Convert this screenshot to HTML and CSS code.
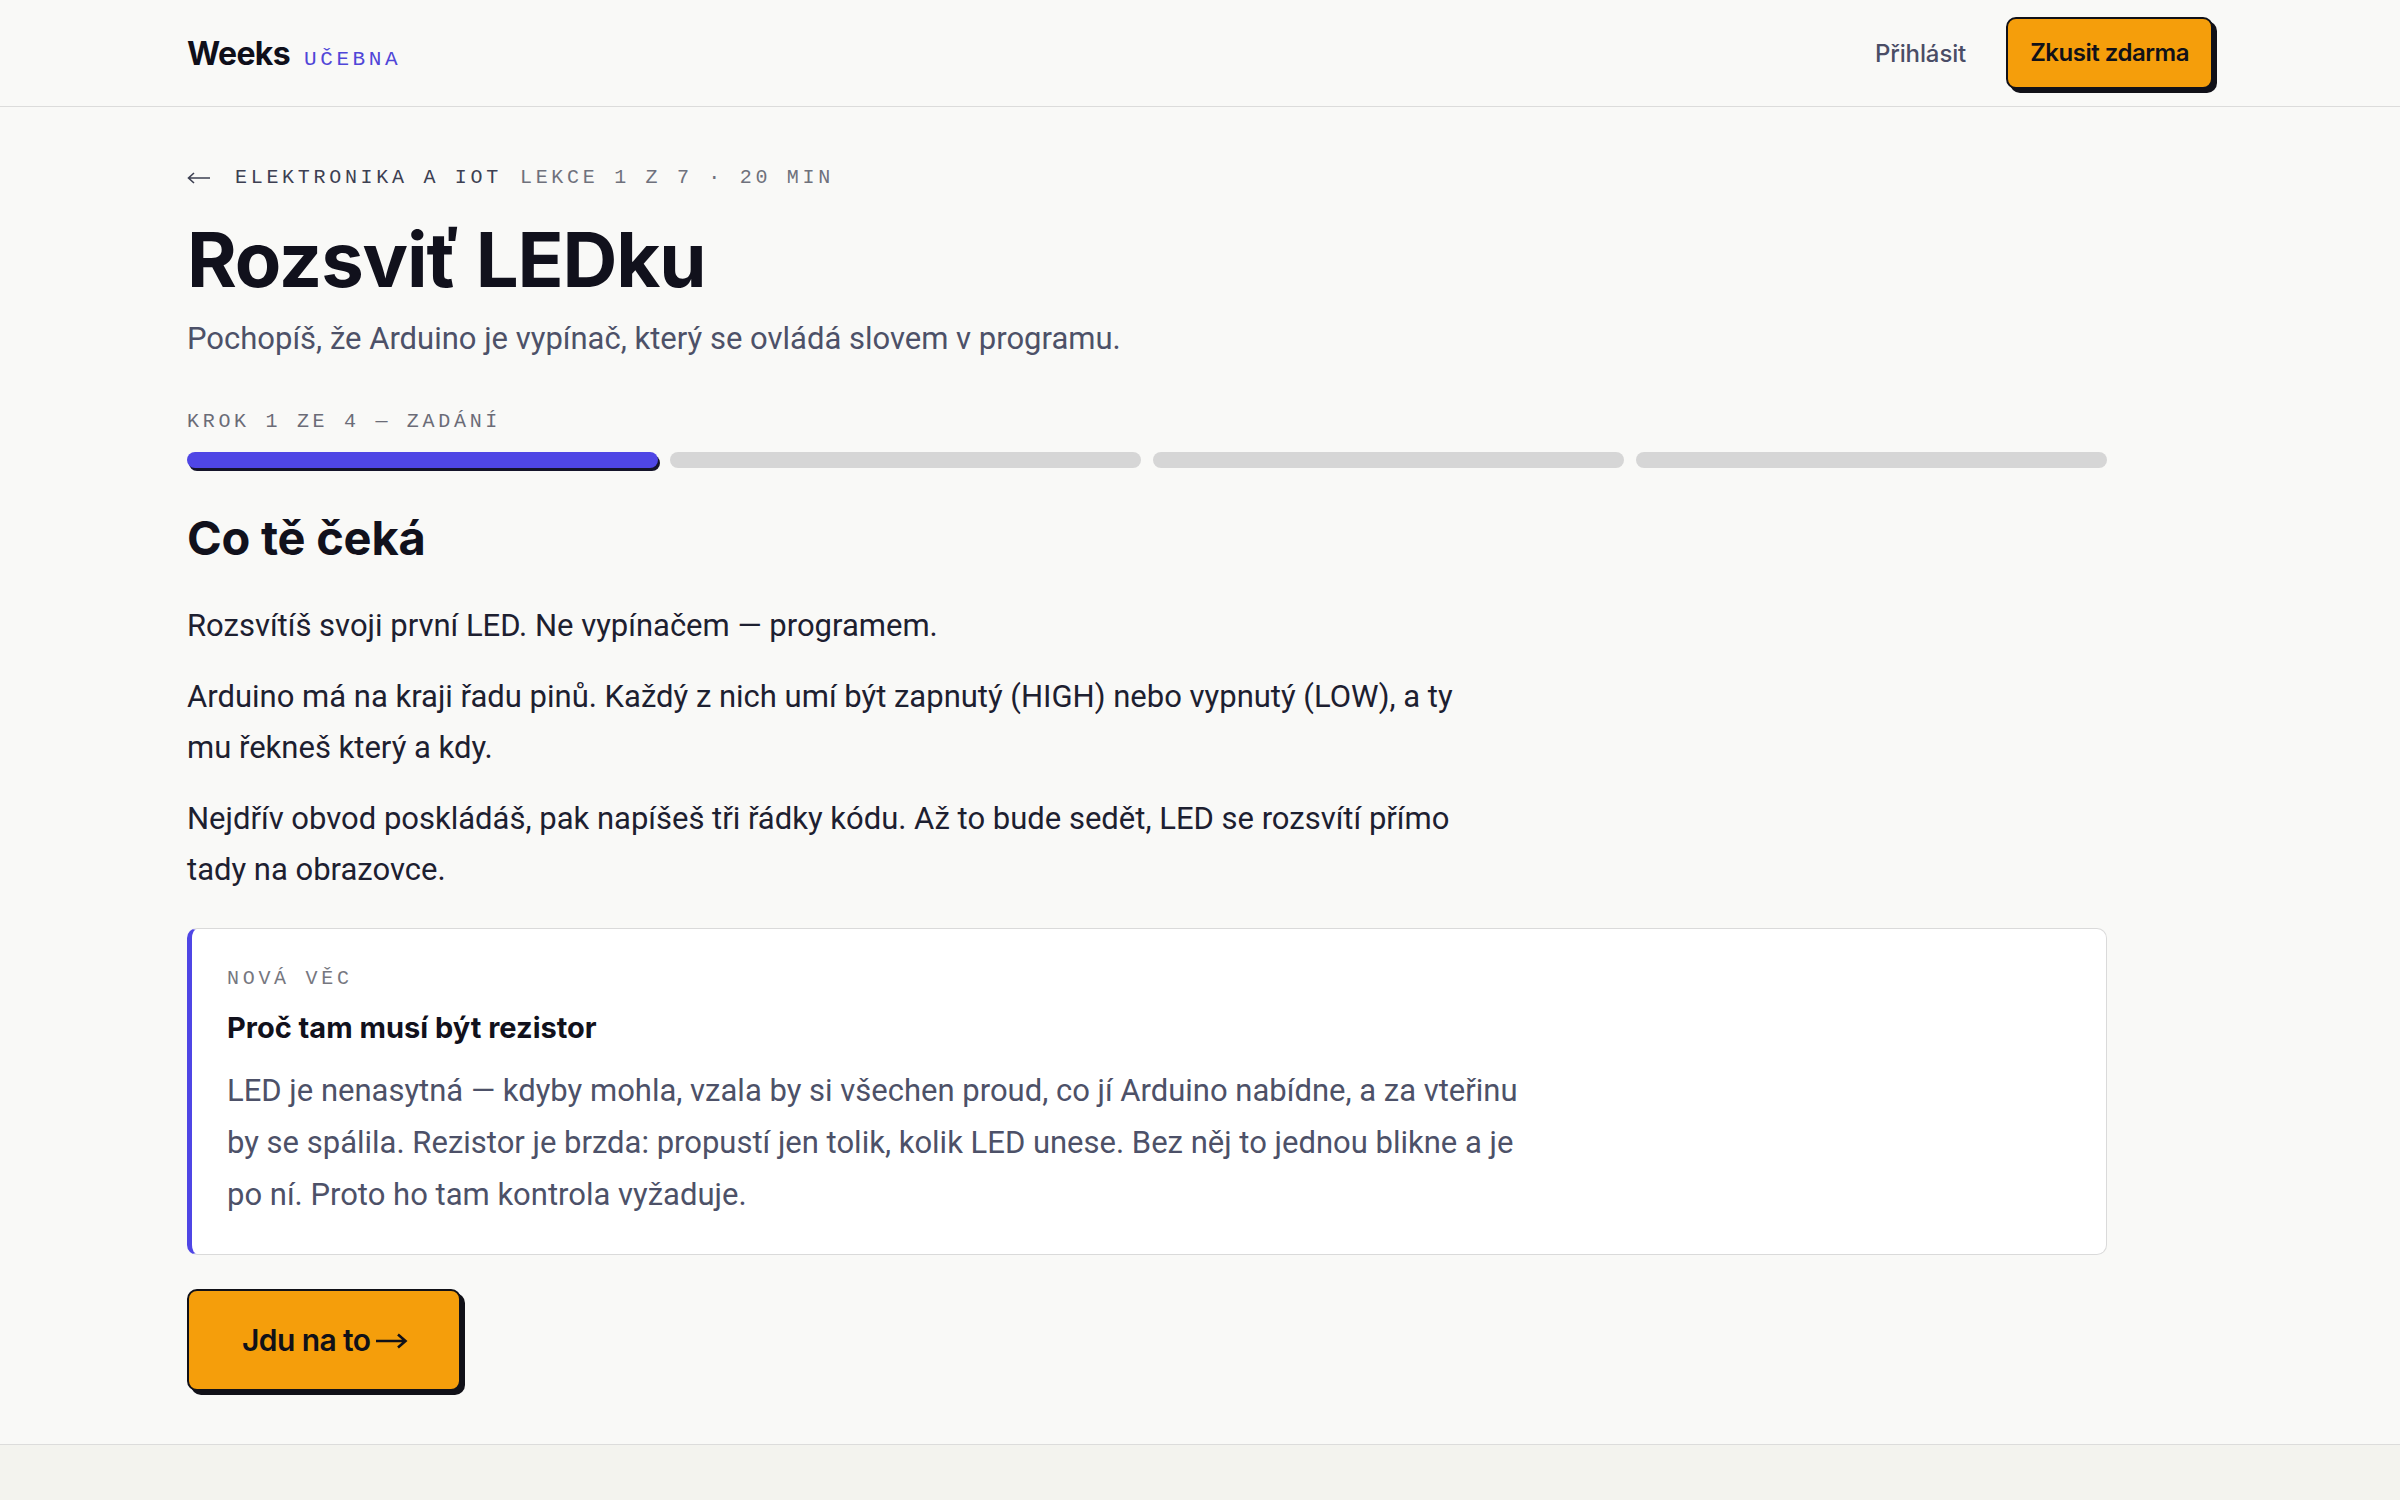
FILE: index.html
```html
<!DOCTYPE html>
<html lang="cs">
<head>
  <meta charset="UTF-8">
  <meta name="viewport" content="width=device-width, initial-scale=1.0">
  <title>Rozsviť LEDku – Weeks Učebna</title>
  <link rel="stylesheet" href="styles.css">
</head>
<body>
  <header class="topbar">
    <div class="wrap topbar-inner">
      <a class="brand" href="#">
        <span class="brand-name">Weeks</span>
        <span class="brand-tag">Učebna</span>
      </a>
      <nav class="topnav">
        <a class="nav-link" href="#">Přihlásit</a>
        <a class="btn btn-small" href="#">Zkusit zdarma</a>
      </nav>
    </div>
  </header>

  <main class="wrap">
    <div class="lesson">
      <div class="crumbs">
        <a class="crumb-back" href="#" aria-label="Zpět">
          <svg width="24" height="12" viewBox="0 0 24 12" fill="none" stroke="currentColor" stroke-width="1.6">
            <path d="M23 6H2M7 1L1.5 6L7 11"/>
          </svg>
        </a>
        <span class="crumb-course">Elektronika a IoT</span>
        <span class="crumb-meta">Lekce 1 z 7 · 20 min</span>
      </div>

      <h1>Rozsviť LEDku</h1>
      <p class="lead">Pochopíš, že Arduino je vypínač, který se ovládá slovem v programu.</p>

      <div class="step-label">Krok 1 ze 4 — Zadání</div>
      <div class="progress">
        <span class="seg active"></span>
        <span class="seg"></span>
        <span class="seg"></span>
        <span class="seg"></span>
      </div>

      <h2>Co tě čeká</h2>
      <div class="prose">
        <p>Rozsvítíš svoji první LED. Ne vypínačem — programem.</p>
        <p>Arduino má na kraji řadu pinů. Každý z nich umí být zapnutý (HIGH) nebo vypnutý (LOW), a ty mu řekneš který a kdy.</p>
        <p>Nejdřív obvod poskládáš, pak napíšeš tři řádky kódu. Až to bude sedět, LED se rozsvítí přímo tady na obrazovce.</p>
      </div>

      <aside class="callout">
        <div class="callout-label">Nová věc</div>
        <h3>Proč tam musí být rezistor</h3>
        <p>LED je nenasytná — kdyby mohla, vzala by si všechen proud, co jí Arduino nabídne, a za vteřinu by se spálila. Rezistor je brzda: propustí jen tolik, kolik LED unese. Bez něj to jednou blikne a je po ní. Proto ho tam kontrola vyžaduje.</p>
      </aside>

      <div class="actions">
        <button class="btn btn-big">Jdu na to
          <svg class="arrow" width="32" height="16" viewBox="0 0 32 16" fill="none" stroke="currentColor" stroke-width="2.6">
            <path d="M0 8H29M22 1.5L29.5 8L22 14.5"/>
          </svg>
        </button>
      </div>
    </div>
  </main>

  <footer class="page-foot"></footer>
</body>
</html>
```

FILE: styles.css
```css
* {
  box-sizing: border-box;
}

html, body {
  margin: 0;
  background: #f3f3ee;
}

body {
  font-family: Roboto, "Liberation Sans", sans-serif;
  color: #14141f;
}

.wrap {
  max-width: 2026px;
  margin: 0 auto;
}

/* top bar */
.topbar {
  background: #f9f9f7;
  border-bottom: 1px solid #dcdcdb;
}

.topbar-inner {
  height: 106px;
  display: flex;
  align-items: center;
  justify-content: space-between;
}

.brand {
  display: flex;
  align-items: baseline;
  gap: 14px;
  text-decoration: none;
}

.brand-name {
  font-family: Inter, Roboto, sans-serif;
  font-size: 32px;
  font-weight: 700;
  letter-spacing: -0.02em;
  color: #0f0f1a;
}

.brand-tag {
  font-family: "Liberation Mono", monospace;
  font-size: 21px;
  letter-spacing: 0.17em;
  text-transform: uppercase;
  color: #5046d8;
}

.topnav {
  display: flex;
  align-items: center;
  gap: 40px;
}

.nav-link {
  font-family: Inter, Roboto, sans-serif;
  font-size: 24px;
  font-weight: 500;
  letter-spacing: -0.005em;
  color: #4a4d66;
  text-decoration: none;
}

.btn {
  display: inline-flex;
  align-items: center;
  background: #f59e0b;
  color: #111118;
  border: 2px solid #111118;
  border-radius: 10px;
  box-shadow: 4px 4px 0 #111118;
  font-family: Inter, Roboto, sans-serif;
  font-weight: 600;
  text-decoration: none;
  cursor: pointer;
}

.btn-small {
  font-size: 24px;
  line-height: 32px;
  padding: 18px 22px;
  letter-spacing: -0.02em;
}

.btn-big {
  font-size: 30px;
  line-height: 38px;
  padding: 30px 51px 30px 53px;
  letter-spacing: -0.02em;
  gap: 6px;
}

.btn-big .arrow {
  margin-top: 2px;
}

/* lesson */
main {
  background: #f9f9f7;
  box-shadow: 0 0 0 100vmax #f9f9f7;
  clip-path: inset(0 -100vmax);
}

.lesson {
  max-width: 1920px;
  padding: 57px 0 53px;
}

.crumbs,
.step-label,
.callout-label {
  font-family: "Liberation Mono", monospace;
  font-size: 20px;
  line-height: 28px;
  letter-spacing: 0.185em;
  text-transform: uppercase;
}

.crumbs {
  display: flex;
  align-items: center;
  gap: 18px;
  color: #6f717c;
}

.crumb-back {
  display: flex;
  color: #3d4052;
  margin-right: 6px;
}

.crumb-course {
  color: #3d4052;
}

h1 {
  margin: 25px 0 0;
  font-family: Inter, Roboto, sans-serif;
  font-size: 76px;
  line-height: 84px;
  font-weight: 700;
  letter-spacing: -0.015em;
  color: #11111c;
}

.lead {
  margin: 15px 0 0;
  font-size: 31px;
  line-height: 46px;
  color: #4d5168;
}

.step-label {
  margin-top: 46px;
  color: #6b6c77;
}

.progress {
  display: grid;
  grid-template-columns: repeat(4, 1fr);
  gap: 12px;
  margin-top: 16px;
}

.seg {
  height: 16px;
  border-radius: 8px;
  background: #d6d6d6;
}

.seg.active {
  background: #4f46e5;
  box-shadow: 2px 3px 0 #15142a;
}

h2 {
  margin: 43px 0 0;
  font-family: Inter, Roboto, sans-serif;
  font-size: 47px;
  line-height: 54px;
  font-weight: 700;
  letter-spacing: -0.005em;
  color: #11111c;
}

.prose p {
  margin: 20px 0 0;
  max-width: 1292px;
  font-size: 31px;
  line-height: 51px;
  color: #1d2030;
}

.prose p:first-child {
  margin-top: 35px;
}

.callout {
  margin-top: 33px;
  background: #fff;
  border: 1px solid #dadada;
  border-left: 5px solid #4f46e5;
  border-radius: 10px;
  padding: 36px 40px 33px 35px;
}

.callout-label {
  color: #76777f;
}

.callout h3 {
  margin: 17px 0 0;
  font-family: Inter, Roboto, sans-serif;
  font-size: 29px;
  line-height: 36px;
  font-weight: 700;
  letter-spacing: 0;
  color: #11111c;
}

.callout p {
  margin: 19px 0 0;
  max-width: 1292px;
  font-size: 31px;
  line-height: 52px;
  color: #4d5168;
}

.actions {
  margin-top: 34px;
}

.page-foot {
  border-top: 1px solid #dcdcdb;
  height: 80px;
}
```
